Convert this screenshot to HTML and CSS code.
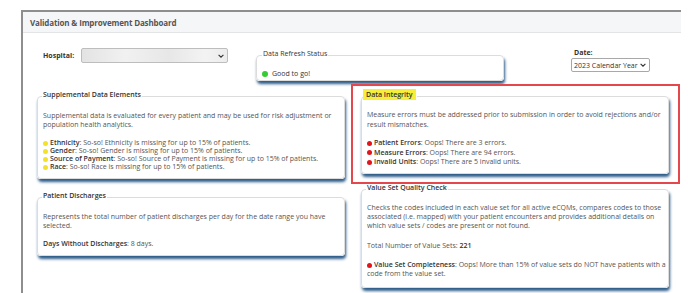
FILE: index.html
```html
<!DOCTYPE html>
<html lang="en">
<head>
  <meta charset="UTF-8" />
  <meta name="viewport" content="width=device-width, initial-scale=1.0"/>
  <title>Validation &amp; Improvement Dashboard</title>
  <link rel="stylesheet" href="styles.css">
</head>
<body>
  <div class="dashboard">
    <div class="dashboard-header">Validation &amp; Improvement Dashboard</div>

    <div class="dashboard-body">
      <!-- Filters and refresh status -->
      <div class="filters">
        <div class="filter filter-hospital">
          <label>Hospital:</label>
          <div class="select select-hospital">
            <span></span>
            <svg class="chevron" width="6" height="4" viewBox="0 0 6 4"><path d="M0.6 0.8 L3 3.2 L5.4 0.8" fill="none" stroke="#333" stroke-width="1.1"/></svg>
          </div>
        </div>

        <fieldset class="card card-refresh">
          <legend>Data Refresh Status</legend>
          <div class="status"><span class="dot dot-green"></span>Good to go!</div>
        </fieldset>

        <div class="filter filter-date">
          <label>Date:</label>
          <div class="select select-date">
            <span>2023 Calendar Year</span>
            <svg class="chevron" width="6" height="4" viewBox="0 0 6 4"><path d="M0.6 0.8 L3 3.2 L5.4 0.8" fill="none" stroke="#333" stroke-width="1.1"/></svg>
          </div>
        </div>
      </div>

      <div class="columns">
        <div class="column column-left">
          <!-- Supplemental Data Elements -->
          <fieldset class="card card-supplemental">
            <legend>Supplemental Data Elements</legend>
            <p>Supplemental data is evaluated for every patient and may be used for risk adjustment or population health analytics.</p>
            <ul class="checks">
              <li><span class="dot dot-yellow"></span><b>Ethnicity</b>: So-so! Ethnicity is missing for up to 15% of patients.</li>
              <li><span class="dot dot-yellow"></span><b>Gender</b>: So-so! Gender is missing for up to 15% of patients.</li>
              <li><span class="dot dot-yellow"></span><b>Source of Payment</b>: So-so! Source of Payment is missing for up to 15% of patients.</li>
              <li><span class="dot dot-yellow"></span><b>Race</b>: So-so! Race is missing for up to 15% of patients.</li>
            </ul>
          </fieldset>

          <!-- Patient Discharges -->
          <fieldset class="card card-discharges">
            <legend>Patient Discharges</legend>
            <p>Represents the total number of patient discharges per day for the date range you have selected.</p>
            <p><b>Days Without Discharges</b>: 8 days.</p>
          </fieldset>
        </div>

        <div class="column column-right">
          <!-- Data Integrity -->
          <div class="callout">
            <fieldset class="card card-integrity">
              <legend><span class="highlight">Data Integrity</span></legend>
              <p>Measure errors must be addressed prior to submission in order to avoid rejections and/or result mismatches.</p>
              <ul class="checks">
                <li><span class="dot dot-red"></span><b>Patient Errors</b>: Oops! There are 3 errors.</li>
                <li><span class="dot dot-red"></span><b>Measure Errors</b>: Oops! There are 94 errors.</li>
                <li><span class="dot dot-red"></span><b>Invalid Units</b>: Oops! There are 5 invalid units.</li>
              </ul>
            </fieldset>
          </div>

          <!-- Value Set Quality Check -->
          <fieldset class="card card-valueset">
            <legend>Value Set Quality Check</legend>
            <p>Checks the codes included in each value set for all active eCQMs, compares codes to those associated (i.e. mapped) with your patient encounters and provides additional details on which value sets / codes are present or not found.</p>
            <p>Total Number of Value Sets: <b>221</b></p>
            <p class="completeness"><span class="nowrap"><span class="dot dot-red"></span><b>Value Set Completeness</b>: Oops! More than 15% of value sets do NOT have patients with a</span><br><span>code from the value set.</span></p>
          </fieldset>
        </div>
      </div>
    </div>
  </div>
</body>
</html>
```

FILE: styles.css
```css
* {
  box-sizing: border-box;
  margin: 0;
  padding: 0;
}

body {
  font-family: 'Open Sans', sans-serif;
  color: #555;
  background: #fff;
  overflow: hidden;
}

.dashboard {
  margin: 10px 0 0 21px;
  width: 660px;
  min-height: calc(100vh - 10px);
  border-top: 2px solid #8e8e8e;
  border-left: 2px solid #8e8e8e;
}

.dashboard-header {
  height: 21px;
  line-height: 22px;
  padding-left: 7px;
  background: #f5f6f8;
  border-bottom: 1px solid #e3e4e6;
  font-size: 8px;
  letter-spacing: -0.15px;
  font-weight: 700;
  color: #555;
}

.dashboard-body {
  padding: 0 12px 0 14px;
}

/* filters row */
.filters {
  display: flex;
  align-items: flex-start;
  padding-top: 15px;
}

.filter label {
  font-size: 7px;
  font-weight: 700;
  color: #333;
}

.filter-hospital {
  width: 219px;
  padding-left: 6px;
  display: flex;
  align-items: center;
  gap: 7px;
}

.select {
  display: flex;
  align-items: center;
  justify-content: space-between;
  border: 1px solid #b0b0b0;
  border-radius: 2px;
  font-size: 7px;
  color: #333;
}

.select-hospital {
  width: 147px;
  height: 15px;
  padding-right: 3px;
  border-color: #bdbdbd;
  background: linear-gradient(to right, #e3e3e3, #f1f1f1 30%, #e7e7e7 60%, #f3f3f3 85%, #ececec);
}

.filter-date {
  margin-left: 67px;
  display: flex;
  flex-direction: column;
  gap: 1px;
}

.filter-date label {
  margin-left: 3px;
}

.select-date {
  width: 79px;
  height: 14px;
  padding: 0 3px 0 2px;
  background: #fff;
  border-color: #a8a8a8;
}

/* cards */
.card {
  min-width: 0;
  border: 1px solid #dcdcdc;
  border-radius: 4px;
  background: #fff;
  box-shadow: 1px 3px 3px #2d5c88;
  padding: 0 5px 6px;
}

.card legend {
  margin-left: -1px;
  padding: 0 1px 3px;
  font-size: 7px;
  line-height: 8px;
  font-weight: 600;
  color: #333;
}

.card p {
  font-size: 7px;
  line-height: 9px;
  margin-top: 8px;
}

.card b {
  font-weight: 600;
  color: #333;
}

.card-refresh {
  width: 248px;
  height: 31px;
  margin-top: 2px;
}

.card-refresh legend {
  font-weight: 400;
  margin-left: 0;
}

.status {
  display: flex;
  align-items: center;
  margin-top: 8px;
  font-size: 7px;
  color: #333;
}

.dot {
  display: inline-block;
  width: 5px;
  height: 5px;
  border-radius: 50%;
  margin-right: 2px;
  vertical-align: -0.5px;
}

.dot-green {
  width: 6px;
  height: 6px;
  background: #33cc33;
  margin-right: 4px;
}

.dot-yellow {
  background: #f2e22c;
}

.dot-red {
  background: #e3141b;
}

.checks {
  list-style: none;
  font-size: 7px;
  line-height: 8.2px;
  margin-top: 6px;
}

/* two columns of cards */
.columns {
  display: grid;
  grid-template-columns: 308px 308px;
  column-gap: 16px;
  margin-top: 10px;
}

.column {
  display: flex;
  flex-direction: column;
  gap: 13px;
}

.column-right {
  gap: 10px;
}

.card-supplemental {
  padding-bottom: 7px;
}

.card-supplemental p {
  margin-top: 9px;
}

.card-supplemental .checks {
  margin-top: 10px;
  line-height: 8px;
}

.card-discharges {
  padding-bottom: 7px;
}

.card-discharges p {
  margin-top: 9px;
}

.card-integrity .highlight {
  background: #f7ee3a;
  padding: 1px 3px;
  margin-left: -4px;
}

.card-integrity p {
  line-height: 10px;
  margin-top: 8px;
}

.card-integrity .checks {
  line-height: 9.7px;
  margin-top: 8px;
}

/* red annotation frame round the Data Integrity card */
.callout {
  margin: -7px -11px -10px -10px;
  padding: 5px 9px 8px 8px;
  border: 2px solid #e4474c;
}

.card-valueset {
  padding-bottom: 9px;
}

.card-valueset p {
  line-height: 8.8px;
  margin-top: 11px;
}

.card-valueset p:first-of-type {
  margin-top: 9px;
}

.card-valueset .completeness {
  line-height: 9px;
  margin-top: 10px;
}

.nowrap {
  white-space: nowrap;
}
```
